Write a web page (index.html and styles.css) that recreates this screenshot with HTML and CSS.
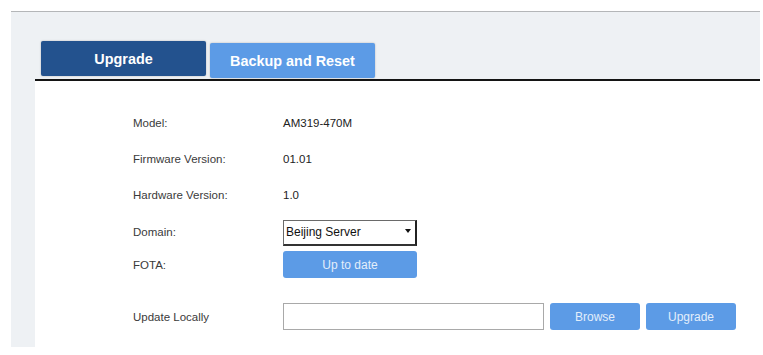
FILE: index.html
```html
<!DOCTYPE html>
<html lang="en">
<head>
  <meta charset="UTF-8" />
  <title>Maintenance - Upgrade</title>
  <link rel="stylesheet" href="styles.css">
</head>
<body>
  <div class="page">
    <div class="panel">
      <div class="tabs">
        <div class="tab active">Upgrade</div>
        <div class="tab">Backup and Reset</div>
      </div>

      <div class="content">
        <div class="row r1">
          <div class="label">Model:</div>
          <div class="value">AM319-470M</div>
        </div>
        <div class="row r2">
          <div class="label">Firmware Version:</div>
          <div class="value">01.01</div>
        </div>
        <div class="row r3">
          <div class="label">Hardware Version:</div>
          <div class="value">1.0</div>
        </div>
        <div class="row r4">
          <div class="label">Domain:</div>
          <div class="select-wrap">
            <select class="select">
              <option>Beijing Server</option>
            </select>
          </div>
        </div>
        <div class="row r5">
          <div class="label">FOTA:</div>
          <button class="btn wide">Up to date</button>
        </div>
        <div class="row r6">
          <div class="label">Update Locally</div>
          <input type="text" class="file-input" />
          <button class="btn small">Browse</button>
          <button class="btn small">Upgrade</button>
        </div>
      </div>
    </div>
  </div>
</body>
</html>
```

FILE: styles.css
```css
* {
  box-sizing: border-box;
}

body {
  margin: 0;
  padding: 0;
  background-color: white;
  font-family: 'Liberation Sans', Arial, sans-serif;
  color: #333;
}

.page {
  padding: 11px 3px 0 11px;
}

.panel {
  border-top: 1px solid #b4b6b8;
  background: #eef1f4;
  padding: 28px 0 0 24px;
  height: 336px;
  display: flex;
  flex-direction: column;
}

.tabs {
  display: flex;
  align-items: flex-end;
  gap: 4px;
  padding-left: 6px;
  border-bottom: 2px solid #141414;
  height: 41px;
  flex-shrink: 0;
}

.tab {
  width: 165px;
  height: 35px;
  margin-bottom: 1px;
  display: flex;
  align-items: center;
  justify-content: center;
  color: white;
  font-size: 14.4px;
  font-weight: 700;
  background: #5c9be6;
  border-radius: 2px;
  box-shadow: 0 0 2px rgba(0, 0, 0, 0.25);
}

.tab.active {
  background: #23528e;
  margin-bottom: 3px;
}

.content {
  flex: 1;
  background: white;
  padding: 24px 0 0 98px;
  font-size: 11.5px;
}

.row {
  display: flex;
  align-items: center;
}

.r1 { height: 36px; }
.r2 { height: 35px; }
.r3 { height: 37px; }
.r4 { height: 38px; }
.r5 { height: 27px; }
.r6 { height: 27px; margin-top: 25px; }

.label {
  width: 150px;
  color: #3a3a3a;
}

.value {
  color: #222;
}

.select-wrap {
  position: relative;
  width: 134px;
  height: 26px;
  margin-top: 1px;
}

.select {
  appearance: none;
  -webkit-appearance: none;
  width: 100%;
  height: 100%;
  margin: 0;
  padding: 0 0 0 2px;
  border: 1px solid #6a6a6a;
  border-right: 2px solid #222;
  border-bottom: 2px solid #333;
  border-radius: 0;
  background: white;
  font-family: inherit;
  font-size: 12px;
  color: #111;
}

.select-wrap::after {
  content: "";
  position: absolute;
  right: 6px;
  top: 9px;
  border-left: 3px solid transparent;
  border-right: 3px solid transparent;
  border-top: 4px solid #111;
  pointer-events: none;
}

.btn {
  height: 27px;
  border: none;
  border-radius: 3px;
  background: #5c9be6;
  color: #e3eefb;
  font-family: inherit;
  font-size: 12px;
  padding: 0;
}

.btn.wide {
  width: 134px;
}

.btn.small {
  width: 90px;
  margin-left: 6px;
}

.file-input {
  width: 261px;
  height: 27px;
  margin: 0;
  border: 1px solid #a9a9a9;
  background: white;
}
```
